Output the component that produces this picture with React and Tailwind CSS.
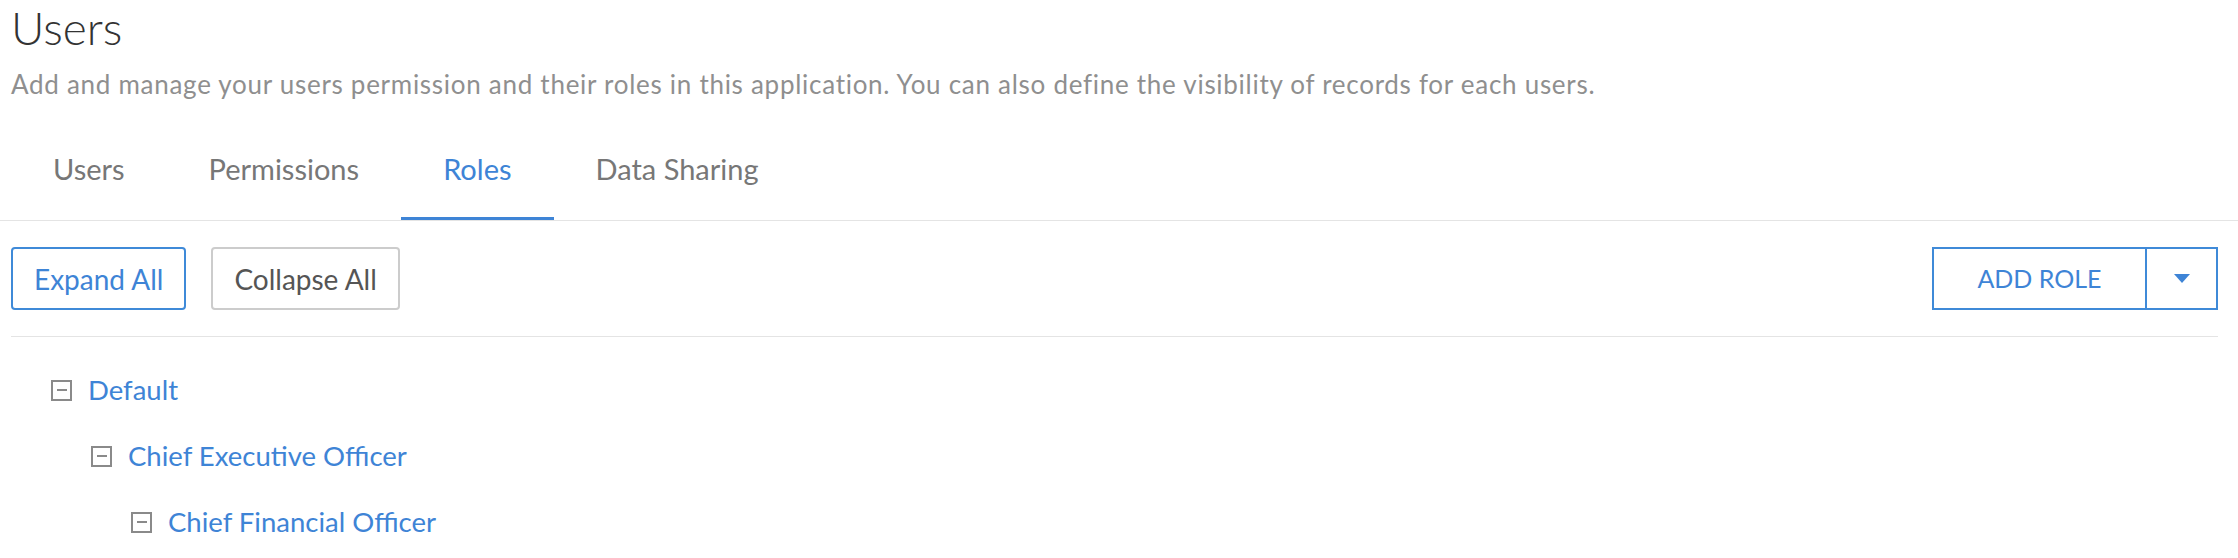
import React from "react";

const tabs = ["Users", "Permissions", "Roles", "Data Sharing"];

const roles = [
  { name: "Default", level: 0 },
  { name: "Chief Executive Officer", level: 1 },
  { name: "Chief Financial Officer", level: 2 },
];

const indent = ["pl-[40px]", "pl-[80px]", "pl-[120px]"];

const MinusBox = () => (
  <span className="flex h-[21px] w-[21px] shrink-0 items-center justify-center border-2 border-[#8a8a8a]">
    <span className="h-[2px] w-[10px] bg-[#8a8a8a]" />
  </span>
);

export default function App() {
  return (
    <div className="h-[558px] w-full overflow-hidden bg-white font-['Lato',sans-serif]">
      {/* HEADER */}
      <div className="pl-[11px]">
        <h1 className="h-[56px] text-[46px] font-light leading-[56px] text-[#333]">Users</h1>
        <p className="mt-[12px] text-[26px] leading-[32px] tracking-[0.72px] text-[#8f8f8f]">
          Add and manage your users permission and their roles in this application. You can also define the visibility of records for each users.
        </p>
      </div>

      {/* TABS */}
      <div className="mt-[20px] flex border-b border-[#e4e4e4] pl-[11px]">
        {tabs.map((t) => (
          <div
            key={t}
            className={
              t === "Roles"
                ? "flex h-[100px] items-center border-b-[3px] border-[#3e84d6] px-[42px] text-[29px] text-[#3e84d6]"
                : "flex h-[100px] items-center border-b-[3px] border-transparent px-[42px] text-[29px] text-[#777]"
            }
          >
            {t}
          </div>
        ))}
      </div>

      <div className="pl-[11px] pr-[20px]">
        {/* TOOLBAR */}
        <div className="flex items-center justify-between border-b border-[#e4e4e4] py-[26px]">
          <div className="flex gap-[25px]">
            <button className="h-[63px] rounded-[4px] border-2 border-[#3f8ad8] px-[21px] text-[28px] text-[#3e84d6]">
              Expand All
            </button>
            <button className="h-[63px] rounded-[4px] border-2 border-[#cccccc] px-[21px] text-[28px] text-[#555]">
              Collapse All
            </button>
          </div>
          <div className="flex h-[63px] border-2 border-[#3f8ad8]">
            <button className="w-[211px] text-[25px] text-[#3e84d6]">ADD ROLE</button>
            <button className="flex w-[71px] items-center justify-center border-l-2 border-[#3f8ad8]">
              <svg width="16" height="9" viewBox="0 0 16 9">
                <path d="M0 0 L16 0 L8 9 Z" fill="#3e84d6" />
              </svg>
            </button>
          </div>
        </div>

        {/* ROLE TREE */}
        <div className="pt-[20px]">
          {roles.map((r) => (
            <div key={r.name} className={"flex h-[66px] items-center gap-[16px] " + indent[r.level]}>
              <MinusBox />
              <span className="text-[27.5px] text-[#3e84d6]">{r.name}</span>
            </div>
          ))}
        </div>
      </div>
    </div>
  );
}
